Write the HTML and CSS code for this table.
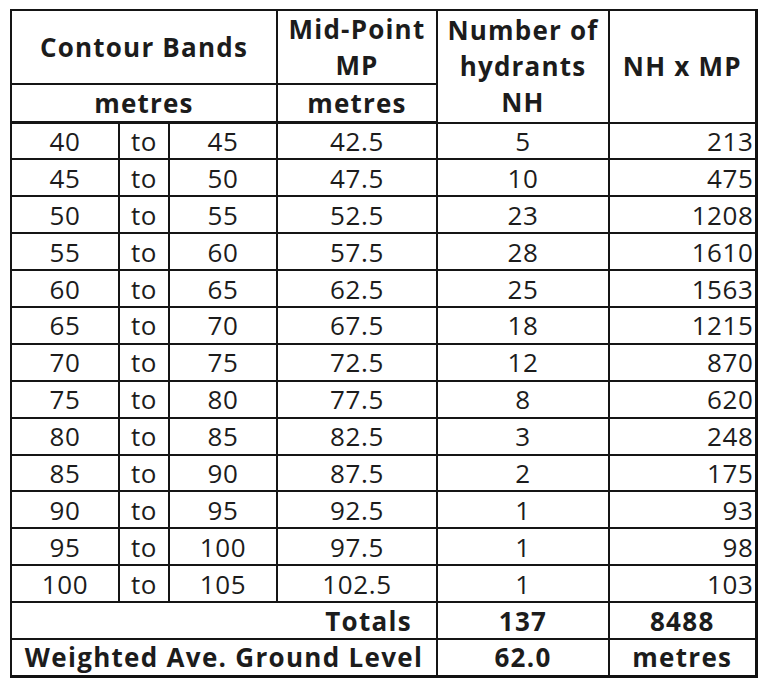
FILE: index.html
```html
<!DOCTYPE html>
<html>
<head>
<meta charset="utf-8">
<link rel="stylesheet" href="styles.css">
</head>
<body>
<div class="wrap">
<table class="grid">
  <colgroup>
    <col class="c1"><col class="c2"><col class="c3"><col class="c4"><col class="c5"><col class="c6">
  </colgroup>
  <thead>
    <tr class="h1">
      <th colspan="3">Contour Bands</th>
      <th>Mid-Point<br>MP</th>
      <th rowspan="2" class="nh">Number of<br>hydrants<br>NH</th>
      <th rowspan="2">NH x MP</th>
    </tr>
    <tr class="h2">
      <th colspan="3">metres</th>
      <th>metres</th>
    </tr>
  </thead>
  <tbody>
    <tr><td>40</td><td>to</td><td>45</td><td>42.5</td><td>5</td><td class="r">213</td></tr>
    <tr><td>45</td><td>to</td><td>50</td><td>47.5</td><td>10</td><td class="r">475</td></tr>
    <tr><td>50</td><td>to</td><td>55</td><td>52.5</td><td>23</td><td class="r">1208</td></tr>
    <tr><td>55</td><td>to</td><td>60</td><td>57.5</td><td>28</td><td class="r">1610</td></tr>
    <tr><td>60</td><td>to</td><td>65</td><td>62.5</td><td>25</td><td class="r">1563</td></tr>
    <tr><td>65</td><td>to</td><td>70</td><td>67.5</td><td>18</td><td class="r">1215</td></tr>
    <tr><td>70</td><td>to</td><td>75</td><td>72.5</td><td>12</td><td class="r">870</td></tr>
    <tr><td>75</td><td>to</td><td>80</td><td>77.5</td><td>8</td><td class="r">620</td></tr>
    <tr><td>80</td><td>to</td><td>85</td><td>82.5</td><td>3</td><td class="r">248</td></tr>
    <tr><td>85</td><td>to</td><td>90</td><td>87.5</td><td>2</td><td class="r">175</td></tr>
    <tr><td>90</td><td>to</td><td>95</td><td>92.5</td><td>1</td><td class="r">93</td></tr>
    <tr><td>95</td><td>to</td><td>100</td><td>97.5</td><td>1</td><td class="r">98</td></tr>
    <tr><td>100</td><td>to</td><td>105</td><td>102.5</td><td>1</td><td class="r">103</td></tr>
  </tbody>
  <tfoot>
    <tr class="tot">
      <td colspan="4" class="totlabel">Totals</td>
      <td>137</td>
      <td>8488</td>
    </tr>
    <tr class="avg">
      <td colspan="4">Weighted Ave. Ground Level</td>
      <td>62.0</td>
      <td>metres</td>
    </tr>
  </tfoot>
</table>
</div>
</body>
</html>
```
FILE: styles.css
```css
html, body {
  margin: 0;
  padding: 0;
  background: #ffffff;
}

.wrap {
  padding: 9px 0 0 10px;
}

.grid {
  border-collapse: collapse;
  table-layout: fixed;
  width: 745px;
  font-family: "Open Sans", "Liberation Sans", sans-serif;
  font-size: 26px;
  letter-spacing: 0.6px;
  color: #1c1c1c;
  border-top: 1px solid #555;
  border-left: 2px solid #222;
  border-right: 3px solid #111;
  border-bottom: 3px solid #111;
}

.c1 { width: 108px; }
.c2 { width: 50px; }
.c3 { width: 108px; }
.c4 { width: 160px; }
.c5 { width: 172px; }
.c6 { width: 147px; }

th, td {
  border: 2px solid #151515;
  padding: 0 2px;
  text-align: center;
  vertical-align: middle;
  white-space: nowrap;
  overflow: hidden;
}

th {
  font-weight: 700;
  line-height: 36px;
  letter-spacing: 1.2px;
}

td {
  line-height: 30px;
  font-weight: 500;
}

.h1 { height: 73px; }
.h2 { height: 37px; }
.h2 th { border-bottom-width: 3px; }

tbody tr { height: 36.9px; }

td.r {
  text-align: right;
  padding-right: 1px;
}

.tot, .avg { height: 37px; }
.tot td, .avg td {
  font-weight: 700;
  letter-spacing: 1.3px;
}
.tot td.totlabel {
  text-align: right;
  padding-right: 24px;
}
```
